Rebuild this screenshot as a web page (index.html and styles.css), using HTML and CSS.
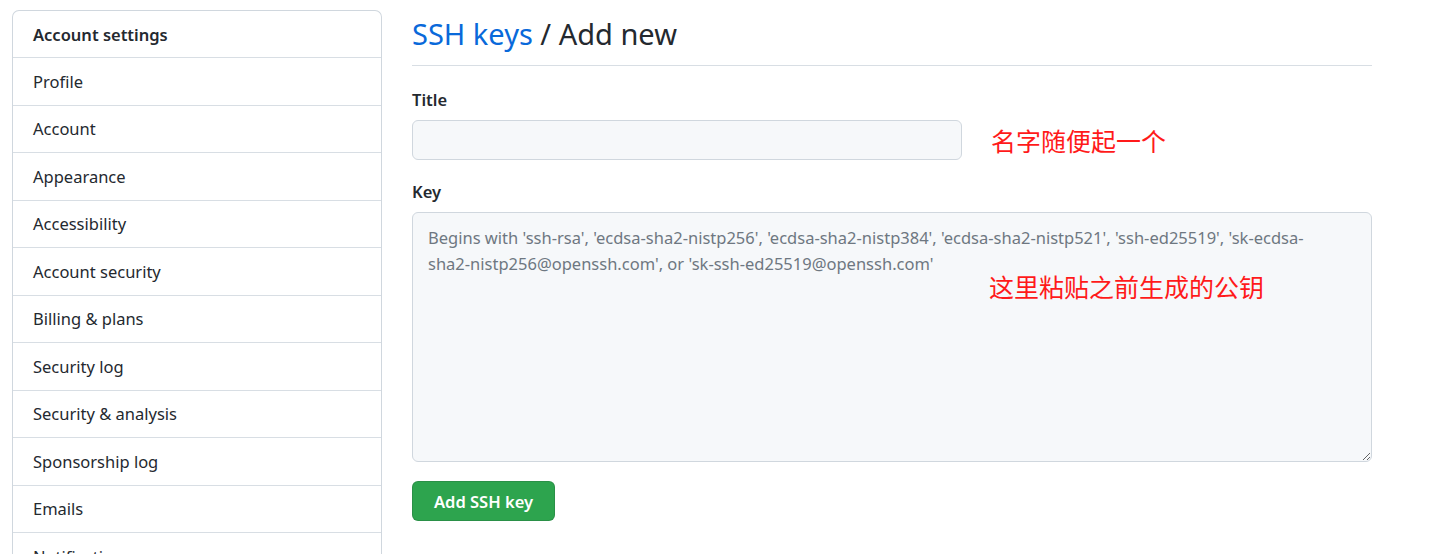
FILE: index.html
```html
<!DOCTYPE html>
<html lang="en">
<head>
<meta charset="utf-8">
<title>SSH keys / Add new</title>
<link rel="stylesheet" href="styles.css">
</head>
<body>
<div class="layout">
  <nav class="menu">
    <div class="menu-heading">Account settings</div>
    <a class="menu-item">Profile</a>
    <a class="menu-item">Account</a>
    <a class="menu-item">Appearance</a>
    <a class="menu-item">Accessibility</a>
    <a class="menu-item">Account security</a>
    <a class="menu-item">Billing &amp; plans</a>
    <a class="menu-item">Security log</a>
    <a class="menu-item">Security &amp; analysis</a>
    <a class="menu-item">Sponsorship log</a>
    <a class="menu-item">Emails</a>
    <a class="menu-item">Notifications</a>
  </nav>
  <main class="main">
    <h2 class="subhead"><a class="crumb">SSH keys</a> / Add new</h2>
    <form class="form">
      <label class="label">Title</label>
      <div class="title-row">
        <input class="input" type="text">
        <span class="note">名字随便起一个</span>
      </div>
      <label class="label key-label">Key</label>
      <div class="key-wrap">
        <textarea class="textarea" placeholder="Begins with 'ssh-rsa', 'ecdsa-sha2-nistp256', 'ecdsa-sha2-nistp384', 'ecdsa-sha2-nistp521', 'ssh-ed25519', 'sk-ecdsa-sha2-nistp256@openssh.com', or 'sk-ssh-ed25519@openssh.com'"></textarea>
        <span class="note note-over">这里粘贴之前生成的公钥</span>
      </div>
      <button class="btn" type="button">Add SSH key</button>
    </form>
  </main>
</div>
</body>
</html>
```
FILE: styles.css
```css
html, body {
  margin: 0;
  padding: 0;
  background: #fff;
  overflow: hidden;
}
body {
  font-family: "Segoe UI", "Noto Sans", "Open Sans", sans-serif;
  color: #24292f;
  font-size: 16.5px;
}
.layout {
  display: flex;
  gap: 30px;
  padding: 10px 0 0 12px;
}
.menu {
  width: 368px;
  flex: none;
  border: 1px solid #d0d7de;
  border-bottom: none;
  border-radius: 7px 7px 0 0;
  display: flex;
  flex-direction: column;
  height: 560px;
  overflow: hidden;
}
.menu-heading, .menu-item {
  height: 46.5px;
  box-sizing: content-box;
  display: flex;
  align-items: center;
  padding: 0 20px;
  border-bottom: 1px solid #d8dee4;
  font-size: 16.5px;
  flex: none;
}
.menu-heading {
  font-weight: 600;
  height: 46px;
}
.menu-item {
  color: #24292f;
  text-decoration: none;
}
.main {
  width: 960px;
  flex: none;
}
.subhead {
  margin: 0;
  font-weight: 400;
  font-size: 29px;
  line-height: 48px;
  padding-bottom: 7px;
  border-bottom: 1px solid #d8dee4;
}
.crumb {
  color: #0969da;
  text-decoration: none;
}
.form {
  display: flex;
  flex-direction: column;
  align-items: flex-start;
  padding-top: 22px;
}
.label {
  font-weight: 600;
  font-size: 16.5px;
  line-height: 24px;
  margin-bottom: 8px;
}
.key-label {
  margin-top: 20px;
}
.title-row {
  display: flex;
  align-items: center;
  gap: 29px;
}
.input {
  width: 550px;
  height: 40px;
  box-sizing: border-box;
  border: 1px solid #d0d7de;
  border-radius: 6px;
  background: #f6f8fa;
  font: inherit;
}
.note {
  color: #ff1a1a;
  font-family: "Noto Sans CJK SC", sans-serif;
  font-size: 25px;
  line-height: 30px;
}
.key-wrap {
  position: relative;
  width: 960px;
}
.textarea {
  display: block;
  width: 960px;
  height: 250px;
  box-sizing: border-box;
  border: 1px solid #d0d7de;
  border-radius: 6px;
  background: #f6f8fa;
  padding: 12px 28px 12px 15px;
  font-family: inherit;
  font-size: 16.5px;
  line-height: 26px;
  color: #24292f;
  resize: vertical;
}
.textarea::placeholder {
  color: #6e7781;
}
.note-over {
  position: absolute;
  left: 577px;
  top: 59px;
}
.btn {
  margin-top: 19px;
  height: 40px;
  padding: 0 21px;
  border: 1px solid rgba(27,31,36,0.15);
  border-radius: 6px;
  background: #2da44e;
  color: #fff;
  font-family: inherit;
  font-weight: 600;
  font-size: 16.5px;
}
```
